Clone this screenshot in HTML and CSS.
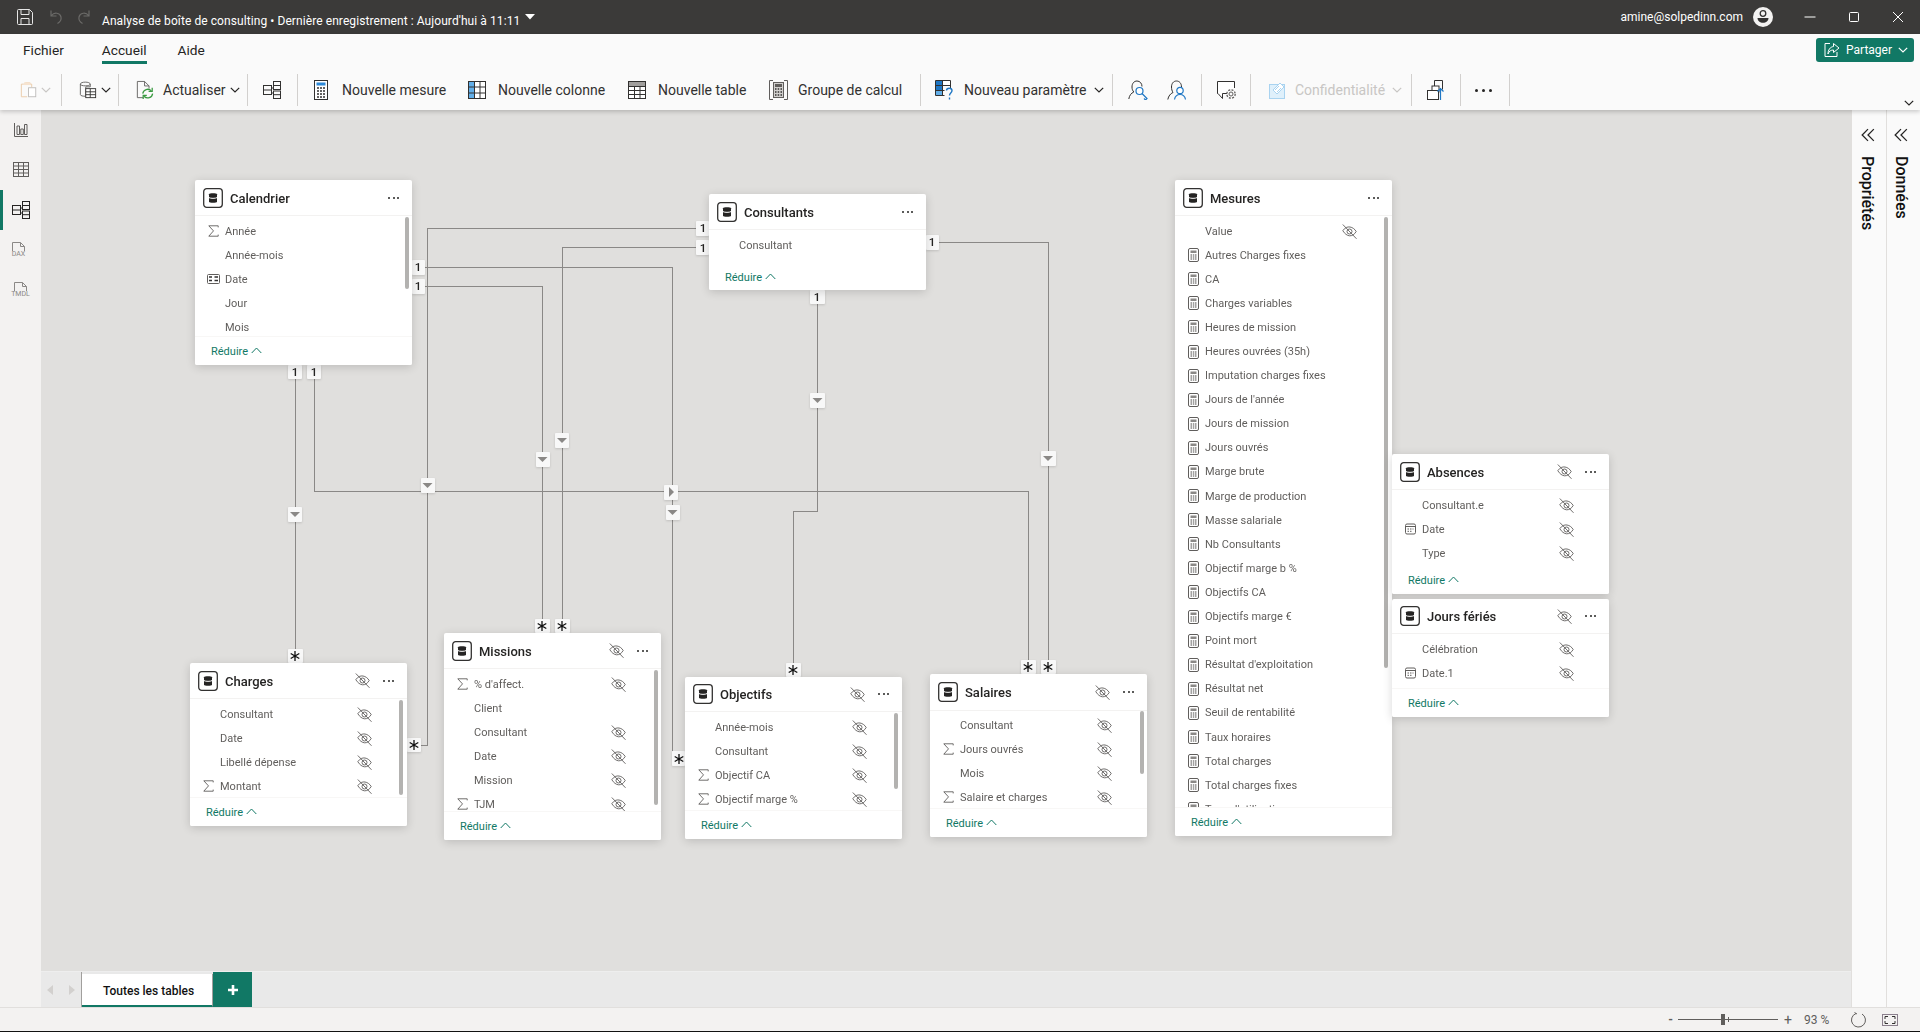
FILE: index.html
```html
<!DOCTYPE html>
<html lang="fr">
<head>
<meta charset="utf-8">
<title>Analyse de boîte de consulting</title>
<link rel="stylesheet" href="styles.css">
</head>
<body>
<svg class="defs" aria-hidden="true">
  <symbol id="db" viewBox="0 0 20 20"><rect x=".7" y=".7" width="18.6" height="18.6" rx="3" fill="#fff" stroke="#323130" stroke-width="1.3"/><path d="M6 6.2c0-1.3 8-1.3 8 0v7.6c0 1.4-8 1.4-8 0z" fill="#252423"/><path d="M6 9.6c1.5 1 6.500 1 8 0" stroke="#fff" fill="none"/></symbol>
  <symbol id="eye" viewBox="0 0 15 15"><g fill="none" stroke="#605e5c" stroke-width=".9"><path d="M.8 6.700C3 3.500 5.500 2.600 8 3c2.400.4 4.800 2 6.200 4.500C12.500 10.500 10 12 7.500 11.800 5 11.600 2.800 9.800.8 6.700z"/><circle cx="7.500" cy="7.500" r="2.500"/><path d="M.8.500 14.500 14.800"/></g></symbol>
  <symbol id="sigma" viewBox="0 0 11 12"><path d="M10.200 2.400V.8H.8l4.700 5.100L.8 11.200h9.400V9.600" fill="none" stroke="#605e5c" stroke-width=".9"/></symbol>
  <symbol id="calc" viewBox="0 0 11 14"><rect x=".5" y=".5" width="10" height="13" rx="1.500" fill="#fff" stroke="#605e5c"/><rect x="2.500" y="2.500" width="6" height="2.500" fill="#8a8886"/><path d="M2.500 7h1.500M4.800 7h1.500M7 7h1.500M2.500 9h1.500M4.800 9h1.500M7 9h1.500M2.500 11h1.500M4.800 11h1.500M7 11h1.500" stroke="#484644" fill="none"/></symbol>
  <symbol id="dateh" viewBox="0 0 13 10"><rect x=".5" y=".5" width="12" height="9" rx="1" fill="none" stroke="#605e5c"/><path d="M2 3h3M2 6.500h3M7.500 3h3.500M7.500 6.500h3.500" stroke="#323130" stroke-width="1.500"/></symbol>
  <symbol id="date" viewBox="0 0 11 11"><rect x=".5" y=".5" width="10" height="10" rx="1.500" fill="none" stroke="#605e5c"/><path d="M.5 3h10" stroke="#605e5c"/><path d="M2.500 5.500h1.500M5 5.500h1.500M7.500 5.500h1M2.500 7.800h1.500M5 7.800h1.500" stroke="#605e5c"/></symbol>
  <symbol id="up" viewBox="0 0 11 7"><path d="M.7 6 5.500 1l4.800 5" fill="none" stroke="#117865"/></symbol>
  <symbol id="down" viewBox="0 0 10 6"><path d="M.8 .8 5 5l4.200-4.200" fill="none" stroke="currentColor" stroke-width="1.200"/></symbol>
  <symbol id="star" viewBox="0 0 10 10"><path d="M5 0v10M.7 2.500l8.600 5M.7 7.500l8.600-5" stroke="#111" stroke-width="1.300"/></symbol>
  <symbol id="model" viewBox="0 0 18 18"><g fill="none" stroke="currentColor" stroke-width="1"><rect x=".5" y="4.500" width="8" height="9"/><path d="M.5 9h8M8.500 7h2M8.500 12h2"/><rect x="10.500" y=".5" width="7" height="8"/><path d="M10.500 4.500h7"/><rect x="10.500" y="10" width="7" height="7.500"/><path d="M10.500 13.700h7"/></g></symbol>
  <symbol id="save" viewBox="0 0 16 16"><g fill="none" stroke="#e6e6e6" stroke-width="1"><path d="M1.500.5h11l3 3v11a1 1 0 0 1-1 1h-13a1 1 0 0 1-1-1v-13a1 1 0 0 1 1-1z"/><path d="M4 .5v5h8v-5M4 15.500v-6h8v6"/></g></symbol>
</svg>

<div class="app">
  <header class="titlebar">
    <svg class="save"><use href="#save"/></svg>
    <svg class="hist hist-undo" viewBox="0 0 16 16"><path d="M4 1.500V7h5.500M4.500 6.500C7 3 13 3.500 14 8c.5 2.500-1 5-3.500 6.500" fill="none" stroke="#6b6a68" stroke-width="1.200"/></svg>
    <svg class="hist hist-redo" viewBox="0 0 16 16"><path d="M12 1.500V7H6.500M11.500 6.500C9 3 3 3.500 2 8c-.5 2.500 1 5 3.500 6.500" fill="none" stroke="#6b6a68" stroke-width="1.200"/></svg>
    <span class="doc-title">Analyse de boîte de consulting • Dernière enregistrement : Aujourd'hui à 11:11</span>
    <svg class="doc-caret" viewBox="0 0 10 6"><path d="M0 0h10L5 5.500z" fill="#fff"/></svg>
    <span class="user">amine@solpedinn.com</span>
    <svg class="avatar" viewBox="0 0 20 20"><circle cx="10" cy="10" r="10" fill="#f3f2f1"/><circle cx="10" cy="6.500" r="2.800" fill="none" stroke="#323130" stroke-width="1.300"/><path d="M4.500 11h11c0 3-2.500 4.800-5.500 4.800S4.500 14 4.500 11z" fill="#323130"/></svg>
    <svg class="win win-min" viewBox="0 0 12 12"><path d="M.5 6h11" stroke="#fff" fill="none"/></svg>
    <svg class="win win-max" viewBox="0 0 12 12"><rect x="1.500" y="1.500" width="9" height="9" rx="1" stroke="#fff" fill="none"/></svg>
    <svg class="win win-close" viewBox="0 0 12 12"><path d="M1 1l10 10M11 1 1 11" stroke="#fff" fill="none"/></svg>
  </header>

  <section class="ribbon">
    <nav class="ribbon-tabs">
      <span class="rtab rtab-file">Fichier</span>
      <span class="rtab rtab-home">Accueil</span>
      <span class="rtab rtab-help">Aide</span>
      <button class="share">
        <svg class="share-ico" viewBox="0 0 16 16"><path d="M6 1.500H1v13h12V10" fill="none" stroke="#fff"/><path d="M9.500 1.500 15 6l-5.500 4.500V8C7 8 5 9 4 12c0-4 2-7 5.500-7.500z" fill="none" stroke="#fff"/></svg>
        <span>Partager</span>
        <svg class="chev"><use href="#down"/></svg>
      </button>
    </nav>
    <div class="toolbar">
      <div class="tool t-paste">
        <svg class="ico20" viewBox="0 0 20 20"><path d="M4 3.500h2V2h5v1.500h2V7M8 17.500H1.500v-14H4" fill="none" stroke="#eac9a6"/><rect x="4.500" y="1.500" width="7" height="3" fill="#f6e3cf"/><rect x="9.500" y="7.500" width="8" height="10" fill="#fff" stroke="#bdbbb9"/></svg>
        <svg class="chev chev-off"><use href="#down"/></svg>
      </div>
      <i class="sep"></i>
      <div class="tool t-data">
        <svg class="ico20" viewBox="0 0 20 20"><path d="M1.500 3.500c0-3 11-3 11 0v3H7.500v10.500c-3 0-6-.5-6-2zM1.500 3.500c0 2.500 11 2.500 11 0" fill="none" stroke="#605e5c"/><rect x="7.500" y="8.500" width="11" height="10" fill="#fff" stroke="#323130"/><path d="M7.500 12h11M7.500 15.200h11M12.500 8.500v10" stroke="#323130"/></svg>
        <svg class="chev"><use href="#down"/></svg>
      </div>
      <i class="sep"></i>
      <div class="tool t-refresh">
        <svg class="ico20" viewBox="0 0 20 20"><path d="M8 18.500H1.500v-18h8l5 5v3M9.500.5v5h5" fill="none" stroke="#605e5c"/><path d="M7.500 14a5.500 5.500 0 0 1 9.500-3M18.500 14a5.500 5.500 0 0 1-9.500 3" fill="none" stroke="#3a9a41" stroke-width="1.400"/><path d="M18 7.500v4h-4M8 20v-4h4" fill="none" stroke="#3a9a41" stroke-width="1.400"/></svg>
        <span>Actualiser</span>
        <svg class="chev"><use href="#down"/></svg>
      </div>
      <i class="sep"></i>
      <div class="tool t-model"><svg class="ico18"><use href="#model"/></svg></div>
      <i class="sep"></i>
      <div class="tool t-measure">
        <svg class="ico-m" viewBox="0 0 14 20"><rect x=".5" y=".5" width="13" height="19" fill="#fff" stroke="#323130"/><rect x="2.500" y="2.500" width="9" height="3" fill="#2b88d8"/><path d="M3 8h2M6 8h2M9 8h2M3 11h2M6 11h2M9 11h2M3 14h2M6 14h2M9 14h2M3 17h2M6 17h2M9 17h2" stroke="#323130" stroke-width="1.500"/></svg>
        <span>Nouvelle mesure</span>
      </div>
      <div class="tool t-col">
        <svg class="ico18" viewBox="0 0 18 18"><rect x=".5" y=".5" width="17" height="17" fill="#fff" stroke="#323130"/><rect x="1" y="1" width="5.500" height="16" fill="#62aee8"/><path d="M6.500 .5v17M12 .5v17M.5 6h17M.5 12h17" stroke="#323130"/></svg>
        <span>Nouvelle colonne</span>
      </div>
      <div class="tool t-table">
        <svg class="ico18" viewBox="0 0 18 18"><rect x=".5" y=".5" width="17" height="17" fill="#fff" stroke="#323130"/><rect x="1" y="1" width="16" height="4.500" fill="#a19f9d"/><path d="M6.500 5.500v12M12 5.500v12M.5 5.500h17M.5 9.500h17M.5 13.500h17" stroke="#323130"/></svg>
        <span>Nouvelle table</span>
      </div>
      <div class="tool t-calc">
        <svg class="ico-c" viewBox="0 0 19 20"><path d="M4 .5H.5v19H4M15 .5h3.500v19H15" fill="none" stroke="#605e5c"/><rect x="4.500" y="2.500" width="10" height="15" fill="#d2d0ce" stroke="#605e5c"/><rect x="6" y="4" width="7" height="3" fill="#605e5c"/><path d="M6 9h1.500M8.700 9h1.500M11.500 9H13M6 12h1.500M8.700 12h1.500M11.500 12H13M6 15h1.500M8.700 15h1.500M11.500 15H13" stroke="#323130" stroke-width="1.300"/></svg>
        <span>Groupe de calcul</span>
      </div>
      <i class="sep"></i>
      <div class="tool t-param">
        <svg class="ico-c" viewBox="0 0 19 20"><path d="M.5.500h15v8M.5 .5v15h9" fill="#fff" stroke="#323130"/><rect x="1" y="1" width="6" height="4.500" fill="#1f77c4"/><rect x="1" y="6" width="6" height="4.500" fill="#1f77c4"/><rect x="1" y="11" width="6" height="4" fill="#62aee8"/><path d="M7.500 .5v15M.5 5.500h15M.5 10.500h9" stroke="#323130"/><path d="M11.500 10.500c0-3 5.500-3 5.500 0 0 2.500-2.500 2.500-2.500 5M14.500 17.500v2" fill="none" stroke="#1f77c4" stroke-width="1.400"/></svg>
        <span>Nouveau paramètre</span>
        <svg class="chev"><use href="#down"/></svg>
      </div>
      <i class="sep"></i>
      <div class="tool t-role">
        <svg class="ico-r" viewBox="0 0 20 20"><path d="M.8 19c.5-3.500 2.500-6 5-7C4.500 10.500 4 9 4 7c0-3.500 2-6 5-6s5 2.500 5 5.500" fill="none" stroke="#323130"/><circle cx="11.500" cy="11" r="3.500" fill="#fff" stroke="#1f77c4" stroke-width="1.200"/><path d="M14 13.500l5 5-1.500 1.500-1.500-1.500" fill="none" stroke="#1f77c4" stroke-width="1.200"/></svg>
        <svg class="ico-r" viewBox="0 0 20 20"><path d="M.8 19.500C1.500 16 3.500 13.500 6 12.500 5 11 4.500 9 4.500 7c0-3.500 2-6 5-6s5 2.500 5 6" fill="none" stroke="#323130"/><circle cx="13" cy="10.500" r="3.200" fill="#fff" stroke="#1f77c4" stroke-width="1.200"/><path d="M7.500 19.500c.5-3 2.500-5 5.500-5s5 2 5.500 5" fill="none" stroke="#1f77c4" stroke-width="1.200"/></svg>
      </div>
      <i class="sep"></i>
      <div class="tool t-view">
        <svg class="ico-c" viewBox="0 0 19 20"><path d="M10 13.500H5.500v5L1 13.500H.5V1.500h17V8" fill="#fff" stroke="#323130"/><circle cx="14" cy="14" r="2" fill="none" stroke="#605e5c"/><circle cx="14" cy="14" r="4.200" fill="none" stroke="#605e5c" stroke-width="1.300" stroke-dasharray="2 1.300"/></svg>
      </div>
      <i class="sep"></i>
      <div class="tool t-conf">
        <svg class="ico-t" viewBox="0 0 16 18"><rect x=".5" y="3.500" width="15" height="14" fill="#dff0fb" stroke="#a9d3f0"/><path d="M4 9l7-7 4 4-7 7zM6 9l4-4M8 11l4-4" fill="#fff" stroke="#a9d3f0"/></svg>
        <span>Confidentialité</span>
        <svg class="chev"><use href="#down"/></svg>
      </div>
      <i class="sep"></i>
      <div class="tool t-pub">
        <svg class="ico18 ico-pub" viewBox="0 0 18 20"><path d="M7.500 6V.5h8v9" fill="none" stroke="#323130"/><rect x="5" y="6" width="7" height="6" fill="#fff" stroke="#323130"/><rect x=".5" y="10.500" width="11" height="9" fill="#fff" stroke="#323130"/><path d="M13.500 20V9M10.500 11.500l3-3 3 3" fill="none" stroke="#1f77c4" stroke-width="1.200"/></svg>
      </div>
      <i class="sep"></i>
      <div class="tool t-more"><span class="dots dots-lg"><i></i><i></i><i></i></span></div>
      <i class="sep"></i>
      <svg class="chev ribbon-collapse"><use href="#down"/></svg>
    </div>
  </section>

  <main class="main">
    <nav class="rail">
      <svg class="rail-ico rail-report" viewBox="0 0 14 14"><path d="M.5 0v13.500H14M3 3h2.500v8.500H3zM6.800 6h2.500v5.500H6.800zM10.500 1.500H13v10h-2.500z" fill="none" stroke="#605e5c"/></svg>
      <svg class="rail-ico rail-table" viewBox="0 0 16 15"><rect x=".5" y=".5" width="15" height="14" fill="none" stroke="#605e5c"/><path d="M.5 4h15M.5 7.500h15M.5 11h15M5.500 .5v14M10.500 .5v14" stroke="#605e5c"/></svg>
      <div class="rail-active"><svg class="ico18 rail-model"><use href="#model"/></svg></div>
      <div class="rail-file rail-dax"><svg class="rail-doc" viewBox="0 0 13 12"><path d="M.5 10V.5h8l4 4V12M8.500 .5v4h4" fill="none" stroke="#8a8886"/></svg><span>DAX</span></div>
      <div class="rail-file rail-tmdl"><svg class="rail-doc" viewBox="0 0 13 12"><path d="M.5 10V.5h8l4 4V10M8.500 .5v4h4" fill="none" stroke="#8a8886"/></svg><span>TMDL</span></div>
    </nav>

    <div class="center">
      <div class="canvas">
        <svg class="links" viewBox="41 110 1810 861" width="1810" height="861">
          <g class="lines" fill="none" stroke="#8a8886" stroke-width="1" shape-rendering="crispEdges">
            <path d="M696 228.500H427.500V745.500H421"/>
            <path d="M696 247.500H562.500V626"/>
            <path d="M425 267.500H672.500V751"/>
            <path d="M425 286.500H542.500V626"/>
            <path d="M295.500 379V649"/>
            <path d="M314.500 379V491.500H1028.500V660"/>
            <path d="M817.500 304V511.500H793.500V663"/>
            <path d="M939 242.500H1048.500V660"/>
          </g>
          <g class="badges">
            <rect x="288" y="365" width="14" height="14" rx="1"/><text x="295" y="376">1</text>
            <rect x="307" y="365" width="14" height="14" rx="1"/><text x="314" y="376">1</text>
            <rect x="412" y="260" width="13" height="15" rx="1"/><text x="418" y="271">1</text>
            <rect x="412" y="279" width="13" height="15" rx="1"/><text x="418" y="290">1</text>
            <rect x="696" y="221" width="13" height="15" rx="1"/><text x="703" y="232">1</text>
            <rect x="696" y="240" width="13" height="15" rx="1"/><text x="703" y="252">1</text>
            <rect x="926" y="235" width="13" height="15" rx="1"/><text x="932" y="246">1</text>
            <rect x="810" y="290" width="15" height="14" rx="1"/><text x="817" y="301">1</text>

            <rect x="288" y="649" width="15" height="14" rx="1"/><use href="#star" x="290" y="651" width="10" height="10"/>
            <rect x="407" y="738" width="14" height="14" rx="1"/><use href="#star" x="409" y="740" width="10" height="10"/>
            <rect x="535" y="619" width="15" height="14" rx="1"/><use href="#star" x="537" y="621" width="10" height="10"/>
            <rect x="555" y="619" width="15" height="14" rx="1"/><use href="#star" x="557" y="621" width="10" height="10"/>
            <rect x="672" y="751" width="13" height="15" rx="1"/><use href="#star" x="674" y="754" width="10" height="10"/>
            <rect x="786" y="663" width="15" height="14" rx="1"/><use href="#star" x="788" y="665" width="10" height="10"/>
            <rect x="1021" y="660" width="15" height="14" rx="1"/><use href="#star" x="1023" y="662" width="10" height="10"/>
            <rect x="1041" y="660" width="15" height="14" rx="1"/><use href="#star" x="1043" y="662" width="10" height="10"/>

            <rect x="288" y="507" width="14" height="15" rx="1"/><path class="tri" d="M290 512h10l-5 5z"/>
            <rect x="421" y="478" width="14" height="15" rx="1"/><path class="tri" d="M422.500 483h10l-5 5z"/>
            <rect x="536" y="452" width="14" height="15" rx="1"/><path class="tri" d="M537.500 457h10l-5 5z"/>
            <rect x="555" y="433" width="14" height="15" rx="1"/><path class="tri" d="M557 438h10l-5 5z"/>
            <rect x="664" y="485" width="14" height="15" rx="1"/><path class="tri" d="M669 487v10l5-5z"/>
            <rect x="666" y="505" width="14" height="15" rx="1"/><path class="tri" d="M667.500 510h10l-5 5z"/>
            <rect x="810" y="393" width="15" height="15" rx="1"/><path class="tri" d="M812.500 398h10l-5 5z"/>
            <rect x="1041" y="451" width="15" height="15" rx="1"/><path class="tri" d="M1043 456h10l-5 5z"/>
          </g>
        </svg>

        <article class="card c-cal">
          <header class="card-head"><svg class="db"><use href="#db"/></svg><h3>Calendrier</h3><span class="dots"><i></i><i></i><i></i></span></header>
          <ul class="fields">
            <li class="row"><svg class="fi"><use href="#sigma"/></svg><span class="name">Année</span></li>
            <li class="row"><span class="name">Année-mois</span></li>
            <li class="row"><svg class="fi fw"><use href="#dateh"/></svg><span class="name">Date</span></li>
            <li class="row"><span class="name">Jour</span></li>
            <li class="row"><span class="name">Mois</span></li>
          </ul>
          <footer class="card-foot">Réduire<svg class="up"><use href="#up"/></svg></footer>
          <i class="scroll s-cal"></i>
        </article>

        <article class="card c-cons">
          <header class="card-head"><svg class="db"><use href="#db"/></svg><h3>Consultants</h3><span class="dots"><i></i><i></i><i></i></span></header>
          <ul class="fields">
            <li class="row"><span class="name">Consultant</span></li>
          </ul>
          <footer class="card-foot plain">Réduire<svg class="up"><use href="#up"/></svg></footer>
        </article>

        <article class="card c-charges">
          <header class="card-head"><svg class="db"><use href="#db"/></svg><h3>Charges</h3><svg class="eye"><use href="#eye"/></svg><span class="dots"><i></i><i></i><i></i></span></header>
          <ul class="fields">
            <li class="row"><span class="name">Consultant</span><svg class="eye"><use href="#eye"/></svg></li>
            <li class="row"><span class="name">Date</span><svg class="eye"><use href="#eye"/></svg></li>
            <li class="row"><span class="name">Libellé dépense</span><svg class="eye"><use href="#eye"/></svg></li>
            <li class="row"><svg class="fi"><use href="#sigma"/></svg><span class="name">Montant</span><svg class="eye"><use href="#eye"/></svg></li>
          </ul>
          <footer class="card-foot">Réduire<svg class="up"><use href="#up"/></svg></footer>
          <i class="scroll s-charges"></i>
        </article>

        <article class="card c-missions">
          <header class="card-head"><svg class="db"><use href="#db"/></svg><h3>Missions</h3><svg class="eye"><use href="#eye"/></svg><span class="dots"><i></i><i></i><i></i></span></header>
          <ul class="fields">
            <li class="row"><svg class="fi"><use href="#sigma"/></svg><span class="name">% d'affect.</span><svg class="eye"><use href="#eye"/></svg></li>
            <li class="row"><span class="name">Client</span></li>
            <li class="row"><span class="name">Consultant</span><svg class="eye"><use href="#eye"/></svg></li>
            <li class="row"><span class="name">Date</span><svg class="eye"><use href="#eye"/></svg></li>
            <li class="row"><span class="name">Mission</span><svg class="eye"><use href="#eye"/></svg></li>
            <li class="row"><svg class="fi"><use href="#sigma"/></svg><span class="name">TJM</span><svg class="eye"><use href="#eye"/></svg></li>
          </ul>
          <footer class="card-foot">Réduire<svg class="up"><use href="#up"/></svg></footer>
          <i class="scroll s-missions"></i>
        </article>

        <article class="card c-obj">
          <header class="card-head"><svg class="db"><use href="#db"/></svg><h3>Objectifs</h3><svg class="eye"><use href="#eye"/></svg><span class="dots"><i></i><i></i><i></i></span></header>
          <ul class="fields">
            <li class="row"><span class="name">Année-mois</span><svg class="eye"><use href="#eye"/></svg></li>
            <li class="row"><span class="name">Consultant</span><svg class="eye"><use href="#eye"/></svg></li>
            <li class="row"><svg class="fi"><use href="#sigma"/></svg><span class="name">Objectif CA</span><svg class="eye"><use href="#eye"/></svg></li>
            <li class="row"><svg class="fi"><use href="#sigma"/></svg><span class="name">Objectif marge %</span><svg class="eye"><use href="#eye"/></svg></li>
          </ul>
          <footer class="card-foot">Réduire<svg class="up"><use href="#up"/></svg></footer>
          <i class="scroll s-obj"></i>
        </article>

        <article class="card c-sal">
          <header class="card-head"><svg class="db"><use href="#db"/></svg><h3>Salaires</h3><svg class="eye"><use href="#eye"/></svg><span class="dots"><i></i><i></i><i></i></span></header>
          <ul class="fields">
            <li class="row"><span class="name">Consultant</span><svg class="eye"><use href="#eye"/></svg></li>
            <li class="row"><svg class="fi"><use href="#sigma"/></svg><span class="name">Jours ouvrés</span><svg class="eye"><use href="#eye"/></svg></li>
            <li class="row"><span class="name">Mois</span><svg class="eye"><use href="#eye"/></svg></li>
            <li class="row"><svg class="fi"><use href="#sigma"/></svg><span class="name">Salaire et charges</span><svg class="eye"><use href="#eye"/></svg></li>
          </ul>
          <footer class="card-foot">Réduire<svg class="up"><use href="#up"/></svg></footer>
          <i class="scroll s-sal"></i>
        </article>

        <article class="card c-mes">
          <header class="card-head"><svg class="db"><use href="#db"/></svg><h3>Mesures</h3><span class="dots"><i></i><i></i><i></i></span></header>
          <ul class="fields">
            <li class="row"><span class="name">Value</span><svg class="eye"><use href="#eye"/></svg></li>
            <li class="row"><svg class="fi fc"><use href="#calc"/></svg><span class="name">Autres Charges fixes</span></li>
            <li class="row"><svg class="fi fc"><use href="#calc"/></svg><span class="name">CA</span></li>
            <li class="row"><svg class="fi fc"><use href="#calc"/></svg><span class="name">Charges variables</span></li>
            <li class="row"><svg class="fi fc"><use href="#calc"/></svg><span class="name">Heures de mission</span></li>
            <li class="row"><svg class="fi fc"><use href="#calc"/></svg><span class="name">Heures ouvrées (35h)</span></li>
            <li class="row"><svg class="fi fc"><use href="#calc"/></svg><span class="name">Imputation charges fixes</span></li>
            <li class="row"><svg class="fi fc"><use href="#calc"/></svg><span class="name">Jours de l'année</span></li>
            <li class="row"><svg class="fi fc"><use href="#calc"/></svg><span class="name">Jours de mission</span></li>
            <li class="row"><svg class="fi fc"><use href="#calc"/></svg><span class="name">Jours ouvrés</span></li>
            <li class="row"><svg class="fi fc"><use href="#calc"/></svg><span class="name">Marge brute</span></li>
            <li class="row"><svg class="fi fc"><use href="#calc"/></svg><span class="name">Marge de production</span></li>
            <li class="row"><svg class="fi fc"><use href="#calc"/></svg><span class="name">Masse salariale</span></li>
            <li class="row"><svg class="fi fc"><use href="#calc"/></svg><span class="name">Nb Consultants</span></li>
            <li class="row"><svg class="fi fc"><use href="#calc"/></svg><span class="name">Objectif marge b %</span></li>
            <li class="row"><svg class="fi fc"><use href="#calc"/></svg><span class="name">Objectifs CA</span></li>
            <li class="row"><svg class="fi fc"><use href="#calc"/></svg><span class="name">Objectifs marge €</span></li>
            <li class="row"><svg class="fi fc"><use href="#calc"/></svg><span class="name">Point mort</span></li>
            <li class="row"><svg class="fi fc"><use href="#calc"/></svg><span class="name">Résultat d'exploitation</span></li>
            <li class="row"><svg class="fi fc"><use href="#calc"/></svg><span class="name">Résultat net</span></li>
            <li class="row"><svg class="fi fc"><use href="#calc"/></svg><span class="name">Seuil de rentabilité</span></li>
            <li class="row"><svg class="fi fc"><use href="#calc"/></svg><span class="name">Taux horaires</span></li>
            <li class="row"><svg class="fi fc"><use href="#calc"/></svg><span class="name">Total charges</span></li>
            <li class="row"><svg class="fi fc"><use href="#calc"/></svg><span class="name">Total charges fixes</span></li>
            <li class="row"><svg class="fi fc"><use href="#calc"/></svg><span class="name">Taux d'utilisation</span></li>
          </ul>
          <footer class="card-foot">Réduire<svg class="up"><use href="#up"/></svg></footer>
          <i class="scroll s-mes"></i>
        </article>

        <article class="card c-abs">
          <header class="card-head"><svg class="db"><use href="#db"/></svg><h3>Absences</h3><svg class="eye"><use href="#eye"/></svg><span class="dots"><i></i><i></i><i></i></span></header>
          <ul class="fields">
            <li class="row"><span class="name">Consultant.e</span><svg class="eye"><use href="#eye"/></svg></li>
            <li class="row"><svg class="fi"><use href="#date"/></svg><span class="name">Date</span><svg class="eye"><use href="#eye"/></svg></li>
            <li class="row"><span class="name">Type</span><svg class="eye"><use href="#eye"/></svg></li>
          </ul>
          <footer class="card-foot plain">Réduire<svg class="up"><use href="#up"/></svg></footer>
        </article>

        <article class="card c-jours">
          <header class="card-head"><svg class="db"><use href="#db"/></svg><h3>Jours fériés</h3><svg class="eye"><use href="#eye"/></svg><span class="dots"><i></i><i></i><i></i></span></header>
          <ul class="fields">
            <li class="row"><span class="name">Célébration</span><svg class="eye"><use href="#eye"/></svg></li>
            <li class="row"><svg class="fi"><use href="#date"/></svg><span class="name">Date.1</span><svg class="eye"><use href="#eye"/></svg></li>
          </ul>
          <footer class="card-foot">Réduire<svg class="up"><use href="#up"/></svg></footer>
        </article>
      </div>

      <div class="tabbar">
        <div class="tab-nav">
          <svg viewBox="0 0 6 10"><path d="M6 0v10L0 5z" fill="#d2d0ce"/></svg>
          <svg viewBox="0 0 6 10"><path d="M0 0v10l6-5z" fill="#d2d0ce"/></svg>
        </div>
        <div class="tab">Toutes les tables</div>
        <div class="tab-add"><svg viewBox="0 0 12 12"><path d="M6 1v10M1 6h10" stroke="#fff" stroke-width="2.600"/></svg></div>
      </div>
    </div>

    <aside class="pane pane-props">
      <svg class="collapse" viewBox="0 0 12 12"><path d="M6 1 1 6l5 5M11 1 6 6l5 5" fill="none" stroke="#252423" stroke-width="1.100"/></svg>
      <span class="pane-label">Propriétés</span>
    </aside>
    <aside class="pane pane-data">
      <svg class="collapse" viewBox="0 0 12 12"><path d="M6 1 1 6l5 5M11 1 6 6l5 5" fill="none" stroke="#252423" stroke-width="1.100"/></svg>
      <span class="pane-label">Données</span>
    </aside>
  </main>

  <footer class="status">
    <span class="zoom-minus">-</span>
    <div class="slider"><i class="thumb"></i><i class="tick"></i></div>
    <span class="zoom-plus">+</span>
    <span class="zoom-val">93 %</span>
    <svg class="st-ico st-refresh" viewBox="0 0 16 16"><path d="M5 1.500A7 7 0 1 0 11 2M3.500 .5 6 2" fill="none" stroke="#605e5c"/></svg>
    <svg class="st-ico st-fit" viewBox="0 0 16 12"><rect x=".5" y=".5" width="15" height="11" fill="none" stroke="#8a7f8c"/><path d="M3 5V2.500h3M10 2.500h3V5M3 7v2.500h3M10 9.500h3V7" fill="none" stroke="#323130"/></svg>
  </footer>
</div>
</body>
</html>
```

FILE: styles.css
```css
* { box-sizing: border-box; }
html, body { margin: 0; padding: 0; height: 100%; overflow: hidden; }
body { font-family: "Roboto", "Liberation Sans", sans-serif; color: #252423; background: #f3f2f1; }
ul { list-style: none; margin: 0; padding: 0; }
h3 { margin: 0; }
i { display: block; font-style: normal; }
.defs { position: absolute; width: 0; height: 0; }

.app { width: 1920px; height: 1032px; display: flex; flex-direction: column; border-bottom: 1px solid #111; }

/* title bar */
.titlebar { height: 34px; flex: none; background: #3b3a39; display: flex; align-items: center; color: #fff; font-size: 12px; padding-left: 17px; }
.save { width: 16px; height: 16px; }
.hist { width: 16px; height: 16px; }
.hist-undo { margin-left: 14px; }
.hist-redo { margin-left: 14px; }
.doc-title { margin-left: 9px; margin-top: 7px; width: 420px; white-space: nowrap; letter-spacing: .08px; }
.doc-caret { width: 10px; height: 6px; margin-left: 3px; }
.user { margin-left: auto; }
.avatar { width: 20px; height: 20px; margin-left: 10px; }
.win { width: 12px; height: 12px; }
.win-min { margin-left: 31px; }
.win-max { margin-left: 32px; }
.win-close { margin-left: 32px; margin-right: 16px; }

/* ribbon */
.ribbon { height: 76px; flex: none; background: #fafafa; box-shadow: 0 2px 4px rgba(0,0,0,.18); position: relative; z-index: 5; }
.ribbon-tabs { height: 38px; display: flex; position: relative; font-size: 13.700px; padding-left: 23px; }
.rtab { height: 30px; padding-top: 8px; color: #252423; border-bottom: 3px solid transparent; }
.rtab-home { margin-left: 38px; border-bottom-color: #117865; }
.rtab-help { margin-left: 31px; }
.share { margin-left: auto; margin-right: 6px; margin-top: 4px; width: 98px; height: 24px; background: #117865; color: #fff; border: 0; border-radius: 3px; display: flex; align-items: center; padding: 0 0 0 8px; font: 12px "Roboto", sans-serif; }
.share-ico { width: 16px; height: 16px; margin-right: 6px; }
.share .chev { margin-left: 6px; color: #fff; }
.chev { width: 10px; height: 6px; color: #252423; flex: none; }

.toolbar { height: 38px; display: flex; align-items: center; padding-left: 20px; font-size: 14px; position: relative; color: #323130; }
.sep { width: 1px; height: 32px; background: #d2d0ce; flex: none; margin-top: -3px; }
.tool { display: flex; align-items: center; height: 32px; flex: none; white-space: nowrap; margin-top: -2px; }
.ico20 { width: 18px; height: 20px; flex: none; }
.ico18 { width: 18px; height: 18px; flex: none; }
.ico-pub { height: 20px; }
.ico-m { width: 14px; height: 20px; flex: none; }
.ico-c { width: 19px; height: 20px; flex: none; }
.ico-r { width: 20px; height: 20px; flex: none; }
.ico-t { width: 16px; height: 18px; flex: none; }
.chev-off { color: #c8c6c4; }
.t-paste { width: 41px; gap: 3px; }
.t-data { width: 56px; padding-left: 17px; gap: 4px; }
.t-refresh { width: 128px; padding-left: 17px; gap: 9px; }
.t-refresh .chev { margin-left: -5px; }
.t-model { width: 49px; padding-left: 15px; }
.t-measure { width: 154px; padding-left: 16px; gap: 14px; }
.t-col { width: 160px; padding-left: 16px; gap: 12px; }
.t-table { width: 141px; padding-left: 16px; gap: 12px; }
.t-calc { width: 167px; padding-left: 16px; gap: 10px; }
.t-param { width: 191px; padding-left: 14px; gap: 10px; }
.t-param .chev { margin-left: -3px; }
.t-role { width: 88px; padding-left: 15px; gap: 19px; }
.t-view { width: 48px; padding-left: 15px; }
.t-conf { width: 160px; padding-left: 18px; gap: 10px; color: #c8c6c4; }
.t-conf .chev { color: #c8c6c4; margin-left: -3px; }
.t-pub { width: 48px; padding-left: 15px; }
.t-more { width: 48px; padding-left: 14px; }
.ribbon-collapse { position: absolute; right: 6px; bottom: 4px; }
.dots { display: flex; gap: 2.500px; align-items: center; }
.dots i { width: 2px; height: 2px; background: #252423; border-radius: 50%; }
.dots-lg { gap: 4px; }
.dots-lg i { width: 3px; height: 3px; }

/* main */
.main { flex: 1; display: flex; min-height: 0; }
.rail { width: 41px; flex: none; background: #f3f2f1; display: flex; flex-direction: column; align-items: center; position: relative; padding-top: 13px; }
.rail-ico { display: block; flex: none; }
.rail-report { width: 14px; height: 14px; }
.rail-table { width: 16px; height: 15px; margin-top: 25px; }
.rail-active { align-self: stretch; height: 40px; margin-top: 13px; border-left: 3px solid #117865; display: flex; align-items: center; padding-left: 9px; color: #252423; }
.rail-file { display: flex; flex-direction: column; align-items: center; height: 16px; font-size: 7px; color: #8a8886; line-height: 7px; }
.rail-file span { margin-top: -3px; background: #f3f2f1; }
.rail-dax { margin-top: 12px; margin-left: -4px; }
.rail-tmdl { margin-top: 24px; }
.rail-doc { width: 13px; height: 12px; display: block; flex: none; }

.center { flex: 1; display: flex; flex-direction: column; min-width: 0; }
.canvas { flex: 1; background: #e0dfdd; position: relative; overflow: hidden; }
.links { position: absolute; left: 0; top: 0; display: block; }
.badges { filter: drop-shadow(0 1px 1px rgba(0,0,0,.14)); }
.badges rect { fill: #f8f8f8; }
.badges text { font: 500 11.500px "Roboto", sans-serif; fill: #252423; text-anchor: middle; }
.badges .tri { fill: #8a8886; }

/* table cards */
.card { position: absolute; width: 217px; background: #fff; border-radius: 2px; box-shadow: 0 2px 10px rgba(0,0,0,.16); display: flex; flex-direction: column; overflow: hidden; }
.c-cal { left: 154px; top: 70px; height: 185px; }
.c-cons { left: 668px; top: 84px; height: 96px; }
.c-charges { left: 149px; top: 553px; height: 163px; }
.c-missions { left: 403px; top: 523px; height: 207px; }
.c-obj { left: 644px; top: 567px; height: 162px; }
.c-sal { left: 889px; top: 564px; height: 163px; }
.c-mes { left: 1134px; top: 70px; height: 656px; }
.c-abs { left: 1351px; top: 344px; height: 140px; }
.c-jours { left: 1351px; top: 489px; height: 118px; }

.card-head { height: 36px; flex: none; display: grid; grid-template-columns: 20px 137px 15px 24px; align-items: center; padding: 0 13px 0 8px; border-bottom: 1px solid #f3f2f1; }
.c-obj .card-head, .c-jours .card-head { height: 35px; }
.c-sal .card-head { height: 37px; }
.card-head h3 { font-size: 13px; font-weight: 500; margin-left: 7px; padding-top: 1px; color: #252423; white-space: nowrap; }
.card-head .dots { grid-column: 4; justify-content: flex-end; }
.card-head .eye { grid-column: 3; }
.db { width: 20px; height: 20px; }
.eye { width: 15px; height: 15px; grid-column: 3; }
.fields { flex: 1; min-height: 0; overflow: hidden; padding-top: 3px; }
.c-sal .fields { padding-top: 2px; }
.row { height: 24px; display: grid; grid-template-columns: 17px 137px 15px; align-items: center; padding-left: 13px; font-size: 11px; color: #605e5c; }
.c-mes .row { height: 24.100px; }
.row .name { grid-column: 2; white-space: nowrap; }
.fi { width: 11px; height: 12px; grid-column: 1; grid-row: 1; }
.fc { height: 14px; }
.fw { width: 13px; height: 10px; margin-left: -1px; }
.card-foot { height: 29px; flex: none; display: flex; align-items: center; padding-left: 16px; padding-top: 1px; font-size: 11px; color: #117865; background: #fff; border-top: 1px solid #f8f7f6; }
.card-foot.plain { border-top: 0; }
.c-cons .card-foot { padding-top: 3px; }
.up { width: 11px; height: 7px; margin-left: 3px; margin-top: -2px; }
.scroll { position: absolute; right: 4px; width: 4px; border-radius: 2px; background: #b3b2b0; }
.s-cal { top: 37px; height: 72px; right: 3px; }
.s-charges { top: 37px; height: 95px; }
.s-missions { top: 37px; height: 135px; right: 3px; }
.s-obj { top: 36px; height: 76px; }
.s-sal { top: 37px; height: 63px; right: 3px; }
.s-mes { top: 37px; height: 451px; }

/* tab bar */
.tabbar { height: 36px; flex: none; background: #e9e9e9; display: flex; border-top: 1px solid #eeeeee; align-items: flex-end; }
.tab-nav { width: 41px; align-self: stretch; display: flex; align-items: center; gap: 16px; padding-left: 6px; border-right: 1px solid #a19f9d; }
.tab-nav svg { width: 6px; height: 10px; }
.tab { width: 131px; height: 33px; background: #fff; border-bottom: 2px solid #117865; border-right: 1px solid #a19f9d; font-size: 12px; font-weight: 500; color: #111; display: flex; align-items: center; padding-left: 21px; padding-top: 2px; }
.tab-add { width: 39px; height: 35px; background: #117865; display: flex; align-items: center; justify-content: center; }
.tab-add svg { width: 12px; height: 12px; }

/* panes */
.pane { flex: none; background: #fafafa; display: flex; flex-direction: column; align-items: center; border-left: 1px solid #e1dfdd; padding-top: 18px; }
.pane-props { width: 35px; padding-right: 3px; }
.pane-data { width: 34px; padding-right: 5px; }
.collapse { width: 14px; height: 14px; }
.pane-label { writing-mode: vertical-rl; font-size: 16px; font-weight: 500; color: #111; margin-top: 14px; }

/* status bar */
.status { height: 24px; flex: none; background: #f3f2f1; border-top: 1px solid #e1dfdd; display: flex; align-items: center; justify-content: flex-end; padding-right: 22px; font-size: 12px; color: #605e5c; }
.zoom-minus { margin-right: 5px; font-weight: 700; }
.slider { width: 100px; height: 1px; background: #605e5c; position: relative; margin-right: 1px; }
.thumb { position: absolute; left: 43px; top: -5px; width: 4px; height: 11px; background: #605e5c; }
.tick { position: absolute; left: 50px; top: -2px; width: 1px; height: 5px; background: #605e5c; }
.zoom-plus { margin-left: 5px; font-size: 14px; }
.zoom-val { margin-left: 12px; width: 47px; }
.st-ico { flex: none; }
.st-refresh { width: 16px; height: 16px; }
.st-fit { width: 16px; height: 12px; margin-left: 15px; }
```
